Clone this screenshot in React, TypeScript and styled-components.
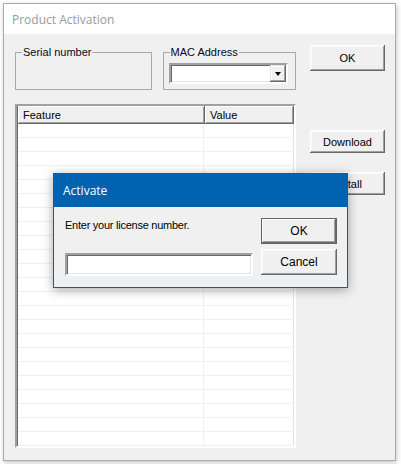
import React from "react";
import styled, { createGlobalStyle } from "styled-components";

const Global = createGlobalStyle`
  html, body { margin: 0; padding: 0; background: #ffffff; }
  body { font-family: "Liberation Sans", Arial, sans-serif; }
`;

const Window = styled.div`
  position: relative;
  margin: 3px;
  width: 393px;
  height: 458px;
  box-sizing: border-box;
  border: 1px solid #aaaaaa;
  background: #f0f0f0;
  box-shadow: 1px 2px 5px rgba(0, 0, 0, 0.22);
  display: flex;
  flex-direction: column;
`;

const TitleBar = styled.div`
  height: 30px;
  flex: none;
  background: #ffffff;
  display: flex;
  align-items: center;
  padding-left: 8px;
  font-family: "Open Sans", "Noto Sans", sans-serif;
  font-size: 12px;
  color: #9a9a9a;
`;

const Body = styled.div`
  flex: 1;
  display: grid;
  grid-template-columns: 281px 75px;
  column-gap: 14px;
  align-items: start;
  padding: 11px 0 0 11px;
`;

const LeftCol = styled.div`
  display: flex;
  flex-direction: column;
  padding-top: 1px;
`;

const GroupRow = styled.div`
  display: flex;
  gap: 11px;
`;

const Group = styled.fieldset<{ $w: number }>`
  margin: 0;
  padding: 0;
  width: ${(p) => p.$w}px;
  height: 44px;
  box-sizing: border-box;
  border: 1px solid #a8a8a8;
  min-width: 0;
`;

const Legend = styled.legend`
  margin-left: 6px;
  padding: 0 1px;
  font-size: 11px;
  line-height: 13px;
  color: #080820;
`;

const Combo = styled.div`
  margin: 4px 0 0 5px;
  width: 119px;
  height: 21px;
  box-sizing: border-box;
  background: #ffffff;
  border-style: solid;
  border-width: 2px;
  border-color: #a0a0a0 #ffffff #ffffff #a0a0a0;
  box-shadow: inset 1px 1px 0 #696969, inset -1px -1px 0 #e3e3e3;
  display: flex;
  justify-content: flex-end;
`;

const ComboButton = styled.div`
  width: 16px;
  height: 17px;
  box-sizing: border-box;
  background: #f0f0f0;
  box-shadow: inset -1px -1px 0 #696969, inset 1px 1px 0 #e3e3e3,
    inset -2px -2px 0 #a0a0a0, inset 2px 2px 0 #ffffff;
  display: flex;
  align-items: center;
  justify-content: center;
`;

const Arrow = styled.div`
  width: 0;
  height: 0;
  border-left: 3.5px solid transparent;
  border-right: 3.5px solid transparent;
  border-top: 4px solid #000;
  margin-top: 1px;
`;

const ListView = styled.div`
  margin-top: 14px;
  width: 281px;
  height: 344px;
  box-sizing: border-box;
  border-style: solid;
  border-width: 2px;
  border-color: #a0a0a0 #ffffff #ffffff #a0a0a0;
  box-shadow: inset 1px 1px 0 #696969, inset -1px -1px 0 #e3e3e3;
  background: #ffffff;
  display: flex;
  flex-direction: column;
  overflow: hidden;
`;

const HeaderRow = styled.div`
  display: grid;
  grid-template-columns: 187px 1fr;
  height: 18px;
  margin-left: 1px;
`;

const HeaderCell = styled.div`
  background: #f0f0f0;
  box-shadow: inset -1px -1px 0 #696969, inset 1px 1px 0 #ffffff,
    inset -2px -2px 0 #a0a0a0;
  font-size: 11px;
  line-height: 18px;
  padding-left: 5px;
  color: #000;
`;

const Row = styled.div`
  display: grid;
  grid-template-columns: 186px 1fr;
  height: 14px;
  margin-left: 1px;
`;

const Cell = styled.div<{ $first?: boolean }>`
  border-bottom: 1px solid #f0f0f0;
  border-right: ${(p) => (p.$first ? "1px solid #f0f0f0" : "none")};
`;

const RightCol = styled.div`
  display: flex;
  flex-direction: column;
`;

const Button = styled.button<{ $h: number; $mt?: number; $default?: boolean }>`
  margin: ${(p) => p.$mt ?? 0}px 0 0 0;
  width: 100%;
  height: ${(p) => p.$h}px;
  padding: 0;
  border: none;
  background: #f0f0f0;
  font-family: "Liberation Sans", Arial, sans-serif;
  font-size: ${(p) => (p.$default !== undefined ? 12 : 11)}px;
  color: #000;
  box-shadow: ${(p) =>
    p.$default
      ? "inset 0 0 0 1px #646464, inset -2px -2px 0 #696969, inset 2px 2px 0 #ffffff, inset -3px -3px 0 #a0a0a0"
      : "inset -1px -1px 0 #696969, inset 1px 1px 0 #ffffff, inset -2px -2px 0 #a0a0a0, inset 2px 2px 0 #f8f8f8"};
`;

const Dialog = styled.div`
  position: absolute;
  left: 49px;
  top: 169px;
  width: 295px;
  height: 115px;
  box-sizing: border-box;
  border: 1px solid #0063b1;
  border-top: none;
  background: #f0f0f0;
  box-shadow: 0 2px 10px rgba(0, 0, 0, 0.35);
  display: flex;
  flex-direction: column;
`;

const DialogTitle = styled.div`
  height: 34px;
  flex: none;
  margin: 0 -1px;
  background: #0063b1;
  color: #ffffff;
  display: flex;
  align-items: center;
  padding-left: 10px;
  font-family: "Open Sans", "Noto Sans", sans-serif;
  font-size: 12px;
`;

const DialogBody = styled.div`
  display: grid;
  grid-template-columns: 188px 76px;
  column-gap: 8px;
  padding: 11px 0 0 11px;
`;

const DialogLeft = styled.div`
  display: flex;
  flex-direction: column;
`;

const Prompt = styled.div`
  font-size: 11px;
  line-height: 13px;
  margin-top: 1px;
  letter-spacing: -0.25px;
  color: #000;
`;

const TextInput = styled.div`
  margin-top: 21px;
  width: 188px;
  height: 23px;
  box-sizing: border-box;
  background: #ffffff;
  border-style: solid;
  border-width: 2px;
  border-color: #a0a0a0 #ffffff #ffffff #a0a0a0;
  box-shadow: inset 1px 1px 0 #696969, inset -1px -1px 0 #e3e3e3;
`;

const DialogButtons = styled.div`
  display: flex;
  flex-direction: column;
`;

const ROWS = Array.from({ length: 23 }, (_, i) => i);

export default function App() {
  return (
    <>
      <Global />
      <Window>
        <TitleBar>Product Activation</TitleBar>
        <Body>
          <LeftCol>
            <GroupRow>
              <Group $w={137}>
                <Legend>Serial number</Legend>
              </Group>
              <Group $w={134}>
                <Legend>MAC Address</Legend>
                <Combo>
                  <ComboButton>
                    <Arrow />
                  </ComboButton>
                </Combo>
              </Group>
            </GroupRow>
            <ListView>
              <HeaderRow>
                <HeaderCell>Feature</HeaderCell>
                <HeaderCell>Value</HeaderCell>
              </HeaderRow>
              {ROWS.map((r) => (
                <Row key={r}>
                  <Cell $first />
                  <Cell />
                </Row>
              ))}
            </ListView>
          </LeftCol>
          <RightCol>
            <Button $h={26}>OK</Button>
            <Button $h={23} $mt={59}>Download</Button>
            <Button $h={23} $mt={19}>Install</Button>
          </RightCol>
        </Body>
        <Dialog>
          <DialogTitle>Activate</DialogTitle>
          <DialogBody>
            <DialogLeft>
              <Prompt>Enter your license number.</Prompt>
              <TextInput />
            </DialogLeft>
            <DialogButtons>
              <Button $h={26} $default>OK</Button>
              <Button $h={26} $mt={5} $default={false}>Cancel</Button>
            </DialogButtons>
          </DialogBody>
        </Dialog>
      </Window>
    </>
  );
}
